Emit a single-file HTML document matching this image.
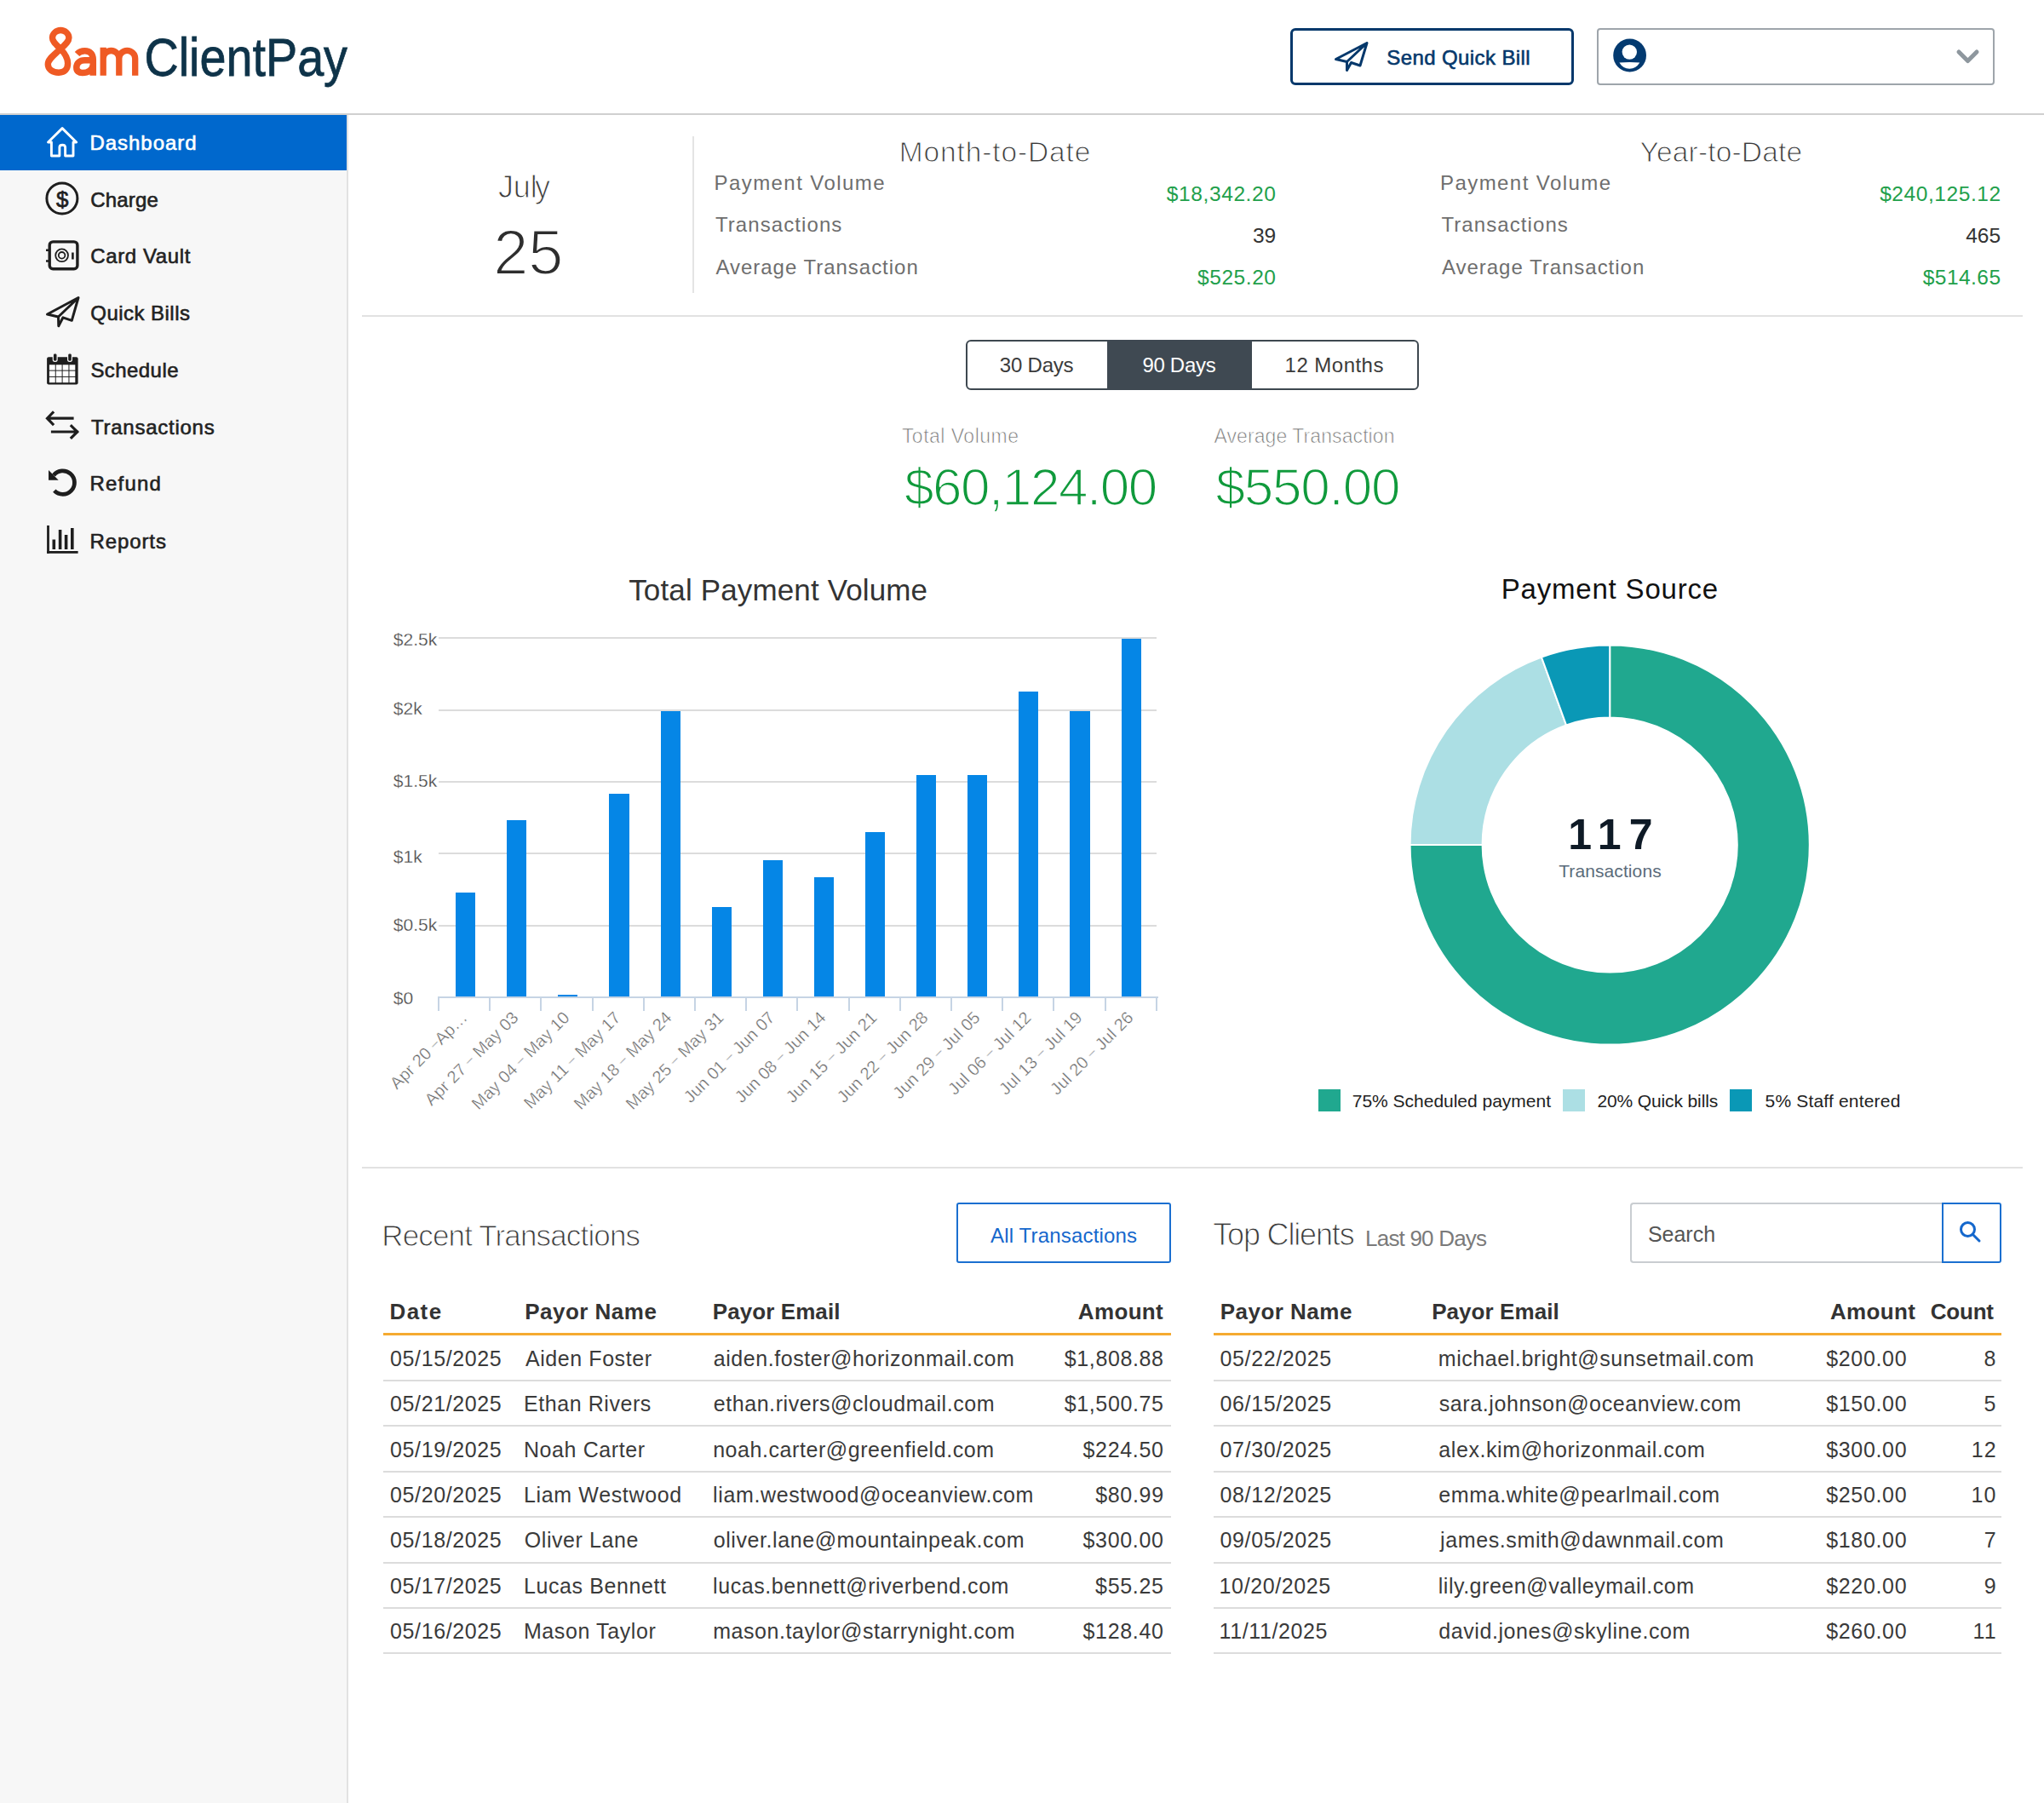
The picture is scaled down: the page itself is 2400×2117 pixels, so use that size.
<!DOCTYPE html>
<html><head><meta charset="utf-8"><title>8am ClientPay Dashboard</title>
<style>
html,body{margin:0;padding:0;}
body{width:2400px;height:2117px;position:relative;overflow:hidden;background:#fff;font-family:"Liberation Sans",sans-serif;}
.t{position:absolute;line-height:1;white-space:nowrap;}
.r{position:absolute;box-sizing:border-box;}
svg{position:absolute;overflow:visible;}
</style></head><body>
<div class="r" style="left:0px;top:133px;width:2400px;height:2px;background:#d0d0d0;"></div>
<div class="r" style="left:0px;top:135px;width:407px;height:1982px;background:#f7f7f7;"></div>
<div class="r" style="left:407px;top:135px;width:2px;height:1982px;background:#e2e2e2;"></div>
<div class="r" style="left:0px;top:135px;width:407px;height:65px;background:#0068cd;"></div>
<svg style="left:0;top:0" width="420" height="120">
<g fill="none" stroke="#ef5a24" stroke-width="7.4">
<path d="M71,57.5 C65,51.5 61.5,48.5 61.5,44.5 C61.5,39.5 66,35.5 71.2,35.5 C76.5,35.5 80.9,39.5 80.9,44.5 C80.9,48.5 77,52 71,57.5 C63,65 56.3,69.5 56.3,75.5 C56.3,81.2 61.5,85.2 69,85.2 C76.5,85.2 79.6,80.5 79.6,74.5 C79.6,68.5 77,63.5 71,57.5 Z"/>
<path d="M121.2,88.7 V55.8 M121.2,68.8 A9.3,9.3 0 0 1 139.8,68.8 V88.7 M139.8,68.8 A9.45,9.45 0 0 1 158.7,68.8 V88.7" stroke-width="7.3"/>
<path d="M90.5,63.5 C93,60.8 96,59.8 99.5,59.8 C106,59.8 109.3,63.5 109.3,70 V88.7 M109.3,70.8 H99.5 C93.2,70.8 89.8,74.5 89.8,79.3 C89.8,83.8 92.7,85.5 96.8,85.5 C103,85.5 109.3,82 109.3,75.5" stroke-width="7.5"/>
</g>
<text x="169.5" y="88.8" font-family="Liberation Sans" font-size="63.5" fill="#0e3349" stroke="#0e3349" stroke-width="0.8" textLength="238.5" lengthAdjust="spacingAndGlyphs">ClientPay</text>
</svg>
<div class="r" style="left:1515px;top:33px;width:333px;height:67px;border:3px solid #05386b;border-radius:6px;"></div>
<svg style="left:0;top:0" width="1" height="1">
<g fill="none" stroke="#05386b" stroke-width="3" stroke-linejoin="round" stroke-linecap="round">
<path d="M1568.5,69.5 L1605,50.5 L1597,77 L1586.5,73.5 L1581.5,82.5 L1581.5,72.5 Z M1605,50.5 L1581.5,72.5"/>
</g></svg>
<div class="t" style="top:56.38px;font-size:24px;color:#05386b;-webkit-text-stroke:0.6px #05386b;letter-spacing:0.394px;left:1628.32px;">Send Quick Bill</div>
<div class="r" style="left:1875px;top:33px;width:467px;height:67px;border:2px solid #9ea5ab;border-radius:4px;"></div>
<svg style="left:0;top:0" width="1" height="1">
<circle cx="1913.6" cy="65" r="19.4" fill="#033a70"/>
<circle cx="1913.3" cy="61.1" r="8.7" fill="#fff"/>
<path d="M1901.4,73.6 Q1913.3,72.6 1925.3,73.6 Q1921,80.8 1913.3,80.8 Q1905.6,80.8 1901.4,73.6 Z" fill="#fff"/>
<path d="M2300,61 L2310.5,71.5 L2321,61" fill="none" stroke="#8e979e" stroke-width="5" stroke-linecap="round" stroke-linejoin="round"/>
</svg>
<div class="t" style="top:155.68px;font-size:24px;color:#fff;-webkit-text-stroke:0.6px #fff;letter-spacing:0.953px;left:105.52px;">Dashboard</div>
<div class="t" style="top:223.08px;font-size:24px;color:#222;-webkit-text-stroke:0.6px #222;letter-spacing:0.172px;left:106.30px;">Charge</div>
<div class="t" style="top:289.48px;font-size:24px;color:#222;-webkit-text-stroke:0.6px #222;letter-spacing:0.609px;left:106.30px;">Card Vault</div>
<div class="t" style="top:355.78px;font-size:24px;color:#222;-webkit-text-stroke:0.6px #222;letter-spacing:0.456px;left:106.36px;">Quick Bills</div>
<div class="t" style="top:422.98px;font-size:24px;color:#222;-webkit-text-stroke:0.6px #222;letter-spacing:0.431px;left:106.42px;">Schedule</div>
<div class="t" style="top:489.98px;font-size:24px;color:#222;-webkit-text-stroke:0.6px #222;letter-spacing:0.744px;left:106.96px;">Transactions</div>
<div class="t" style="top:556.38px;font-size:24px;color:#222;-webkit-text-stroke:0.6px #222;letter-spacing:1.188px;left:105.52px;">Refund</div>
<div class="t" style="top:623.68px;font-size:24px;color:#222;-webkit-text-stroke:0.6px #222;letter-spacing:0.893px;left:105.52px;">Reports</div>
<svg style="left:0;top:0" width="1" height="1">
<path d="M60.4,183 L60.4,167 L56.5,167 L73.1,150.6 L89.7,167 L86,167 L86,183 L76.6,183 L76.6,173 Q76.6,170.2 73.25,170.2 Q69.9,170.2 69.9,173 L69.9,183 Z" fill="none" stroke="#fff" stroke-width="2.9" stroke-linejoin="round"/>
<g fill="none" stroke="#1e1e1e" stroke-width="3">
<circle cx="72.9" cy="233" r="18"/>
<rect x="58.2" y="283.9" width="32.7" height="31.8" rx="4" stroke-width="3.4"/>
<circle cx="72.6" cy="299.8" r="7.4" stroke-width="1.8"/>
<circle cx="72.6" cy="299.8" r="3.8" stroke-width="1.8"/>
<path d="M54,293.8 L58,293.8 M54,306.5 L58,306.5" stroke-width="2.6"/>
<path d="M85.4,296.5 L85.4,304.5" stroke-width="2.6"/>
<path d="M55.5,369 L92,349.5 L84.3,376.3 L74,372.8 L68.8,382.7 L68.5,372 Z M92,349.5 L68.5,372" stroke-linejoin="round"/>
<path d="M56.5,491.2 L85,491.2 M62,484.5 L55.5,491.2 L62,498 M61.5,507 L90.5,507 M84,500.3 L90.8,507 L84,513.8" stroke-linecap="square" stroke-width="3.2"/>
<path d="M63,558 A13.75,13.75 0 1 1 63.8,576.2" stroke-width="4.8"/>
</g>
<text x="73.2" y="242.8" text-anchor="middle" font-family="Liberation Sans" font-size="26" fill="#1e1e1e" stroke="#1e1e1e" stroke-width="0.7">$</text>
<path d="M57,552 L57,563.7 L68.7,563.7 Z" fill="#1e1e1e"/>
<rect x="55.1" y="419.3" width="36.5" height="32.3" rx="2" fill="#1e1e1e"/>
<rect x="62.3" y="414.8" width="4.8" height="9.5" rx="2" fill="#1e1e1e" stroke="#f7f7f7" stroke-width="1.2"/>
<rect x="79.6" y="414.8" width="4.8" height="9.5" rx="2" fill="#1e1e1e" stroke="#f7f7f7" stroke-width="1.2"/>
<g fill="#fff">
<rect x="57.90" y="428.30" width="6.85" height="6.3"/><rect x="65.75" y="428.30" width="6.85" height="6.3"/><rect x="73.60" y="428.30" width="6.85" height="6.3"/><rect x="81.45" y="428.30" width="6.85" height="6.3"/><rect x="57.90" y="435.60" width="6.85" height="6.3"/><rect x="65.75" y="435.60" width="6.85" height="6.3"/><rect x="73.60" y="435.60" width="6.85" height="6.3"/><rect x="81.45" y="435.60" width="6.85" height="6.3"/><rect x="57.90" y="442.90" width="6.85" height="6.3"/><rect x="65.75" y="442.90" width="6.85" height="6.3"/><rect x="73.60" y="442.90" width="6.85" height="6.3"/><rect x="81.45" y="442.90" width="6.85" height="6.3"/>
</g>
<g fill="#1e1e1e">
<rect x="55.1" y="617" width="2.8" height="32.8"/>
<rect x="55.1" y="647" width="36.5" height="2.8"/>
<rect x="61.5" y="633.5" width="3.6" height="11.5"/>
<rect x="68.8" y="622" width="3.6" height="23"/>
<rect x="75.8" y="628" width="3.6" height="17"/>
<rect x="83" y="620" width="3.6" height="25"/>
</g>
</svg>
<div class="t" style="top:202.22px;font-size:36px;color:#3a3a3a;-webkit-text-stroke:1.0px #fff;left:585.11px;">J</div>
<div class="t" style="top:202.22px;font-size:36px;color:#3a3a3a;-webkit-text-stroke:1.0px #fff;left:602.66px;">u</div>
<div class="t" style="top:202.22px;font-size:36px;color:#3a3a3a;-webkit-text-stroke:1.0px #fff;left:622.87px;">l</div>
<div class="t" style="top:202.22px;font-size:36px;color:#3a3a3a;-webkit-text-stroke:1.0px #fff;left:628.11px;">y</div>
<div class="t" style="top:260.34px;font-size:74px;color:#2e2e2e;-webkit-text-stroke:2.0px #fff;left:579.20px;">2</div>
<div class="t" style="top:260.34px;font-size:74px;color:#2e2e2e;-webkit-text-stroke:2.0px #fff;left:620.24px;">5</div>
<div class="r" style="left:813px;top:160px;width:2px;height:184px;background:#e4e4e4;"></div>
<div class="r" style="left:425px;top:370px;width:1950px;height:2px;background:#e2e2e2;"></div>
<div class="t" style="top:162.34px;font-size:33.5px;color:#3a3a3a;-webkit-text-stroke:1.0px #fff;letter-spacing:0.869px;left:1055.84px;">Month-to-Date</div>
<div class="t" style="top:202.68px;font-size:24px;color:#6e6e6e;letter-spacing:1.432px;left:838.52px;">Payment Volume</div>
<div class="t" style="top:251.68px;font-size:24px;color:#6e6e6e;letter-spacing:1.080px;left:839.96px;">Transactions</div>
<div class="t" style="top:301.68px;font-size:24px;color:#6e6e6e;letter-spacing:0.978px;left:840.44px;">Average Transaction</div>
<div class="t" style="top:216.26px;font-size:24.5px;color:#22a04b;letter-spacing:0.616px;left:1369.76px;">$18,342.20</div>
<div class="t" style="top:264.76px;font-size:24.5px;color:#333;left:1470.91px;">39</div>
<div class="t" style="top:314.26px;font-size:24.5px;color:#22a04b;letter-spacing:0.560px;left:1406.06px;">$525.20</div>
<div class="t" style="top:162.34px;font-size:33.5px;color:#3a3a3a;-webkit-text-stroke:1.0px #fff;letter-spacing:0.172px;left:1925.55px;">Year-to-Date</div>
<div class="t" style="top:202.68px;font-size:24px;color:#6e6e6e;letter-spacing:1.432px;left:1691.02px;">Payment Volume</div>
<div class="t" style="top:251.68px;font-size:24px;color:#6e6e6e;letter-spacing:1.080px;left:1692.46px;">Transactions</div>
<div class="t" style="top:301.68px;font-size:24px;color:#6e6e6e;letter-spacing:0.978px;left:1692.94px;">Average Transaction</div>
<div class="t" style="top:216.26px;font-size:24.5px;color:#22a04b;letter-spacing:0.579px;left:2207.16px;">$240,125.12</div>
<div class="t" style="top:264.76px;font-size:24.5px;color:#333;left:2308.13px;">465</div>
<div class="t" style="top:314.26px;font-size:24.5px;color:#22a04b;letter-spacing:0.453px;left:2257.76px;">$514.65</div>
<div class="r" style="left:1134px;top:399px;width:532px;height:59px;border:2px solid #3e4850;border-radius:6px;"></div>
<div class="r" style="left:1300px;top:399px;width:170px;height:59px;background:#3f4952;"></div>
<div class="t" style="top:416.68px;font-size:24px;color:#3b3b3b;letter-spacing:-0.213px;left:1173.85px;">30 Days</div>
<div class="t" style="top:416.68px;font-size:24px;color:#fff;letter-spacing:-0.300px;left:1341.42px;">90 Days</div>
<div class="t" style="top:416.68px;font-size:24px;color:#3b3b3b;letter-spacing:0.470px;left:1508.60px;">12 Months</div>
<div class="t" style="top:500.53px;font-size:23px;color:#777;-webkit-text-stroke:0.7px #fff;letter-spacing:0.493px;left:1058.88px;">Total Volume</div>
<div class="t" style="top:500.53px;font-size:23px;color:#777;-webkit-text-stroke:0.7px #fff;letter-spacing:0.083px;left:1425.44px;">Average Transaction</div>
<div class="t" style="top:541.10px;font-size:62px;color:#109a3c;-webkit-text-stroke:1.6px #fff;letter-spacing:-1.429px;left:1061.88px;">$60,124.00</div>
<div class="t" style="top:540.50px;font-size:62px;color:#109a3c;-webkit-text-stroke:1.6px #fff;letter-spacing:-1.172px;left:1427.38px;">$550.00</div>
<div class="t" style="top:674.77px;font-size:35px;color:#333;letter-spacing:0.138px;left:738.21px;">Total Payment Volume</div>
<div class="r" style="left:515px;top:748px;width:843px;height:2px;background:#dcdcdc;"></div>
<div class="t" style="top:740.22px;font-size:21px;color:#444;-webkit-text-stroke:0.3px #fff;left:461.79px;">$2.5k</div>
<div class="r" style="left:515px;top:833px;width:843px;height:2px;background:#dcdcdc;"></div>
<div class="t" style="top:820.52px;font-size:21px;color:#444;-webkit-text-stroke:0.3px #fff;left:461.79px;">$2k</div>
<div class="r" style="left:515px;top:917px;width:843px;height:2px;background:#dcdcdc;"></div>
<div class="t" style="top:905.52px;font-size:21px;color:#444;-webkit-text-stroke:0.3px #fff;left:461.79px;">$1.5k</div>
<div class="r" style="left:515px;top:1001px;width:843px;height:2px;background:#dcdcdc;"></div>
<div class="t" style="top:995.22px;font-size:21px;color:#444;-webkit-text-stroke:0.3px #fff;left:461.79px;">$1k</div>
<div class="r" style="left:515px;top:1086px;width:843px;height:2px;background:#dcdcdc;"></div>
<div class="t" style="top:1075.02px;font-size:21px;color:#444;-webkit-text-stroke:0.3px #fff;left:461.79px;">$0.5k</div>
<div class="t" style="top:1160.72px;font-size:21px;color:#444;-webkit-text-stroke:0.3px #fff;left:461.79px;">$0</div>
<div class="r" style="left:514px;top:1170px;width:846px;height:2px;background:#c6d4e4;"></div>
<div class="r" style="left:514px;top:1171px;width:2px;height:16px;background:#c6d4e4;"></div>
<div class="r" style="left:574px;top:1171px;width:2px;height:16px;background:#c6d4e4;"></div>
<div class="r" style="left:634px;top:1171px;width:2px;height:16px;background:#c6d4e4;"></div>
<div class="r" style="left:695px;top:1171px;width:2px;height:16px;background:#c6d4e4;"></div>
<div class="r" style="left:755px;top:1171px;width:2px;height:16px;background:#c6d4e4;"></div>
<div class="r" style="left:815px;top:1171px;width:2px;height:16px;background:#c6d4e4;"></div>
<div class="r" style="left:875px;top:1171px;width:2px;height:16px;background:#c6d4e4;"></div>
<div class="r" style="left:935px;top:1171px;width:2px;height:16px;background:#c6d4e4;"></div>
<div class="r" style="left:996px;top:1171px;width:2px;height:16px;background:#c6d4e4;"></div>
<div class="r" style="left:1056px;top:1171px;width:2px;height:16px;background:#c6d4e4;"></div>
<div class="r" style="left:1116px;top:1171px;width:2px;height:16px;background:#c6d4e4;"></div>
<div class="r" style="left:1176px;top:1171px;width:2px;height:16px;background:#c6d4e4;"></div>
<div class="r" style="left:1236px;top:1171px;width:2px;height:16px;background:#c6d4e4;"></div>
<div class="r" style="left:1297px;top:1171px;width:2px;height:16px;background:#c6d4e4;"></div>
<div class="r" style="left:1357px;top:1171px;width:2px;height:16px;background:#c6d4e4;"></div>
<div class="r" style="left:535.0px;top:1048.2px;width:23.2px;height:121.8px;background:#0586e6"></div>
<div class="r" style="left:595.1px;top:963.3px;width:23.2px;height:206.7px;background:#0586e6"></div>
<div class="r" style="left:655.2px;top:1168.1px;width:23.2px;height:1.9px;background:#0586e6"></div>
<div class="r" style="left:715.4px;top:931.7px;width:23.2px;height:238.3px;background:#0586e6"></div>
<div class="r" style="left:775.5px;top:834.9px;width:23.2px;height:335.1px;background:#0586e6"></div>
<div class="r" style="left:835.6px;top:1065px;width:23.2px;height:105.0px;background:#0586e6"></div>
<div class="r" style="left:895.7px;top:1010.2px;width:23.2px;height:159.8px;background:#0586e6"></div>
<div class="r" style="left:955.8px;top:1030.3px;width:23.2px;height:139.7px;background:#0586e6"></div>
<div class="r" style="left:1016.0px;top:977.1px;width:23.2px;height:192.9px;background:#0586e6"></div>
<div class="r" style="left:1076.1px;top:910px;width:23.2px;height:260.0px;background:#0586e6"></div>
<div class="r" style="left:1136.2px;top:910px;width:23.2px;height:260.0px;background:#0586e6"></div>
<div class="r" style="left:1196.3px;top:812px;width:23.2px;height:358.0px;background:#0586e6"></div>
<div class="r" style="left:1256.4px;top:835.1px;width:23.2px;height:334.9px;background:#0586e6"></div>
<div class="r" style="left:1316.6px;top:749.9px;width:23.2px;height:420.1px;background:#0586e6"></div>
<div class="t" style="left:149.60000000000002px;top:1178.57px;width:400px;text-align:right;font-size:20px;color:#666;-webkit-text-stroke:0.4px #fff;transform-origin:100% 16.93px;transform:rotate(-45deg);letter-spacing:0.1px">Apr 20 <span style="font-size:16px;vertical-align:2.5px">–</span>Ap…</div>
<div class="t" style="left:209.80000000000007px;top:1178.57px;width:400px;text-align:right;font-size:20px;color:#666;-webkit-text-stroke:0.4px #fff;transform-origin:100% 16.93px;transform:rotate(-45deg);letter-spacing:0.1px">Apr 27 <span style="font-size:16px;vertical-align:2.5px">–</span> May 03</div>
<div class="t" style="left:270.0px;top:1178.57px;width:400px;text-align:right;font-size:20px;color:#666;-webkit-text-stroke:0.4px #fff;transform-origin:100% 16.93px;transform:rotate(-45deg);letter-spacing:0.1px">May 04 <span style="font-size:16px;vertical-align:2.5px">–</span> May 10</div>
<div class="t" style="left:330.20000000000005px;top:1178.57px;width:400px;text-align:right;font-size:20px;color:#666;-webkit-text-stroke:0.4px #fff;transform-origin:100% 16.93px;transform:rotate(-45deg);letter-spacing:0.1px">May 11 <span style="font-size:16px;vertical-align:2.5px">–</span> May 17</div>
<div class="t" style="left:390.4px;top:1178.57px;width:400px;text-align:right;font-size:20px;color:#666;-webkit-text-stroke:0.4px #fff;transform-origin:100% 16.93px;transform:rotate(-45deg);letter-spacing:0.1px">May 18 <span style="font-size:16px;vertical-align:2.5px">–</span> May 24</div>
<div class="t" style="left:450.6px;top:1178.57px;width:400px;text-align:right;font-size:20px;color:#666;-webkit-text-stroke:0.4px #fff;transform-origin:100% 16.93px;transform:rotate(-45deg);letter-spacing:0.1px">May 25 <span style="font-size:16px;vertical-align:2.5px">–</span> May 31</div>
<div class="t" style="left:510.80000000000007px;top:1178.57px;width:400px;text-align:right;font-size:20px;color:#666;-webkit-text-stroke:0.4px #fff;transform-origin:100% 16.93px;transform:rotate(-45deg);letter-spacing:0.1px">Jun 01 <span style="font-size:16px;vertical-align:2.5px">–</span> Jun 07</div>
<div class="t" style="left:571.0000000000001px;top:1178.57px;width:400px;text-align:right;font-size:20px;color:#666;-webkit-text-stroke:0.4px #fff;transform-origin:100% 16.93px;transform:rotate(-45deg);letter-spacing:0.1px">Jun 08 <span style="font-size:16px;vertical-align:2.5px">–</span> Jun 14</div>
<div class="t" style="left:631.1999999999998px;top:1178.57px;width:400px;text-align:right;font-size:20px;color:#666;-webkit-text-stroke:0.4px #fff;transform-origin:100% 16.93px;transform:rotate(-45deg);letter-spacing:0.1px">Jun 15 <span style="font-size:16px;vertical-align:2.5px">–</span> Jun 21</div>
<div class="t" style="left:691.4000000000001px;top:1178.57px;width:400px;text-align:right;font-size:20px;color:#666;-webkit-text-stroke:0.4px #fff;transform-origin:100% 16.93px;transform:rotate(-45deg);letter-spacing:0.1px">Jun 22 <span style="font-size:16px;vertical-align:2.5px">–</span> Jun 28</div>
<div class="t" style="left:751.5999999999999px;top:1178.57px;width:400px;text-align:right;font-size:20px;color:#666;-webkit-text-stroke:0.4px #fff;transform-origin:100% 16.93px;transform:rotate(-45deg);letter-spacing:0.1px">Jun 29 <span style="font-size:16px;vertical-align:2.5px">–</span> Jul 05</div>
<div class="t" style="left:811.8px;top:1178.57px;width:400px;text-align:right;font-size:20px;color:#666;-webkit-text-stroke:0.4px #fff;transform-origin:100% 16.93px;transform:rotate(-45deg);letter-spacing:0.1px">Jul 06 <span style="font-size:16px;vertical-align:2.5px">–</span> Jul 12</div>
<div class="t" style="left:872.0px;top:1178.57px;width:400px;text-align:right;font-size:20px;color:#666;-webkit-text-stroke:0.4px #fff;transform-origin:100% 16.93px;transform:rotate(-45deg);letter-spacing:0.1px">Jul 13 <span style="font-size:16px;vertical-align:2.5px">–</span> Jul 19</div>
<div class="t" style="left:932.1999999999998px;top:1178.57px;width:400px;text-align:right;font-size:20px;color:#666;-webkit-text-stroke:0.4px #fff;transform-origin:100% 16.93px;transform:rotate(-45deg);letter-spacing:0.1px">Jul 20 <span style="font-size:16px;vertical-align:2.5px">–</span> Jul 26</div>
<div class="t" style="top:674.86px;font-size:33px;color:#111;letter-spacing:0.813px;left:1762.68px;">Payment Source</div>
<svg style="left:0;top:0" width="1" height="1"><path d="M1890.20,757.40 A234.6,234.6 0 1 1 1655.60,992.00 L1740.60,992.00 A149.6,149.6 0 1 0 1890.20,842.40 Z" fill="#20a88f" stroke="#fff" stroke-width="2" stroke-linejoin="miter"/><path d="M1655.60,992.00 A234.6,234.6 0 0 1 1809.96,771.55 L1839.03,851.42 A149.6,149.6 0 0 0 1740.60,992.00 Z" fill="#acdfe4" stroke="#fff" stroke-width="2" stroke-linejoin="miter"/><path d="M1809.96,771.55 A234.6,234.6 0 0 1 1890.20,757.40 L1890.20,842.40 A149.6,149.6 0 0 0 1839.03,851.42 Z" fill="#0a98b6" stroke="#fff" stroke-width="2" stroke-linejoin="miter"/></svg>
<div class="t" style="top:955.16px;font-size:50px;color:#0e1a26;font-weight:bold;letter-spacing:9.312px;left:1841.28px;">117</div>
<div class="t" style="top:1011.82px;font-size:21px;color:#5b6b7a;letter-spacing:0.097px;left:1830.18px;">Transactions</div>
<div class="r" style="left:1548px;top:1279px;width:26px;height:26px;background:#20a88f;"></div>
<div class="r" style="left:1835px;top:1279px;width:26px;height:26px;background:#acdfe4;"></div>
<div class="r" style="left:2031px;top:1279px;width:26px;height:26px;background:#0a98b6;"></div>
<div class="t" style="top:1281.92px;font-size:21px;color:#222;letter-spacing:-0.013px;left:1587.75px;">75% Scheduled payment</div>
<div class="t" style="top:1281.92px;font-size:21px;color:#222;letter-spacing:-0.125px;left:1875.45px;">20% Quick bills</div>
<div class="t" style="top:1281.92px;font-size:21px;color:#222;letter-spacing:0.181px;left:2072.56px;">5% Staff entered</div>
<div class="r" style="left:425px;top:1370px;width:1950px;height:2px;background:#e2e2e2;"></div>
<div class="t" style="top:1433.07px;font-size:35px;color:#3a3a3a;-webkit-text-stroke:1.0px #fff;letter-spacing:-0.851px;left:448.31px;">Recent Transactions</div>
<div class="r" style="left:1123px;top:1412px;width:252px;height:71px;border:2px solid #1a6fd0;border-radius:3px;"></div>
<div class="t" style="top:1438.98px;font-size:24px;color:#1467cc;letter-spacing:0.184px;left:1162.94px;">All Transactions</div>
<div class="t" style="top:1526.99px;font-size:26px;color:#333;font-weight:bold;letter-spacing:1.415px;left:457.55px;">Date</div>
<div class="t" style="top:1526.99px;font-size:26px;color:#333;font-weight:bold;letter-spacing:0.480px;left:616.25px;">Payor Name</div>
<div class="t" style="top:1526.99px;font-size:26px;color:#333;font-weight:bold;letter-spacing:0.072px;left:836.85px;">Payor Email</div>
<div class="t" style="top:1526.99px;font-size:26px;color:#333;font-weight:bold;letter-spacing:0.339px;left:1265.85px;">Amount</div>
<div class="r" style="left:450px;top:1565px;width:925px;height:3px;background:#f5aa30;"></div>
<div class="t" style="top:1582.73px;font-size:25px;color:#3a3a3a;letter-spacing:0.616px;left:458.06px;">05/15/2025</div>
<div class="t" style="top:1582.73px;font-size:25px;color:#3a3a3a;letter-spacing:0.578px;left:616.94px;">Aiden Foster</div>
<div class="t" style="top:1582.73px;font-size:25px;color:#3a3a3a;letter-spacing:0.559px;left:837.74px;">aiden.foster@horizonmail.com</div>
<div class="t" style="top:1582.73px;font-size:25px;color:#3a3a3a;letter-spacing:0.618px;left:1249.83px;">$1,808.88</div>
<div class="r" style="left:450px;top:1620px;width:925px;height:2px;background:#dcdcdc;"></div>
<div class="t" style="top:1636.13px;font-size:25px;color:#3a3a3a;letter-spacing:0.616px;left:458.06px;">05/21/2025</div>
<div class="t" style="top:1636.13px;font-size:25px;color:#3a3a3a;letter-spacing:0.573px;left:614.94px;">Ethan Rivers</div>
<div class="t" style="top:1636.13px;font-size:25px;color:#3a3a3a;letter-spacing:0.564px;left:837.74px;">ethan.rivers@cloudmail.com</div>
<div class="t" style="top:1636.13px;font-size:25px;color:#3a3a3a;letter-spacing:0.618px;left:1249.77px;">$1,500.75</div>
<div class="r" style="left:450px;top:1673px;width:925px;height:2px;background:#dcdcdc;"></div>
<div class="t" style="top:1689.53px;font-size:25px;color:#3a3a3a;letter-spacing:0.616px;left:458.06px;">05/19/2025</div>
<div class="t" style="top:1689.53px;font-size:25px;color:#3a3a3a;letter-spacing:0.602px;left:614.94px;">Noah Carter</div>
<div class="t" style="top:1689.53px;font-size:25px;color:#3a3a3a;letter-spacing:0.563px;left:837.17px;">noah.carter@greenfield.com</div>
<div class="t" style="top:1689.53px;font-size:25px;color:#3a3a3a;letter-spacing:0.668px;left:1271.51px;">$224.50</div>
<div class="r" style="left:450px;top:1727px;width:925px;height:2px;background:#dcdcdc;"></div>
<div class="t" style="top:1742.93px;font-size:25px;color:#3a3a3a;letter-spacing:0.616px;left:458.06px;">05/20/2025</div>
<div class="t" style="top:1742.93px;font-size:25px;color:#3a3a3a;letter-spacing:0.652px;left:614.94px;">Liam Westwood</div>
<div class="t" style="top:1742.93px;font-size:25px;color:#3a3a3a;letter-spacing:0.618px;left:837.11px;">liam.westwood@oceanview.com</div>
<div class="t" style="top:1742.93px;font-size:25px;color:#3a3a3a;letter-spacing:0.676px;left:1286.21px;">$80.99</div>
<div class="r" style="left:450px;top:1780px;width:925px;height:2px;background:#dcdcdc;"></div>
<div class="t" style="top:1796.33px;font-size:25px;color:#3a3a3a;letter-spacing:0.616px;left:458.06px;">05/18/2025</div>
<div class="t" style="top:1796.33px;font-size:25px;color:#3a3a3a;letter-spacing:0.565px;left:615.81px;">Oliver Lane</div>
<div class="t" style="top:1796.33px;font-size:25px;color:#3a3a3a;letter-spacing:0.577px;left:837.74px;">oliver.lane@mountainpeak.com</div>
<div class="t" style="top:1796.33px;font-size:25px;color:#3a3a3a;letter-spacing:0.668px;left:1271.51px;">$300.00</div>
<div class="r" style="left:450px;top:1834px;width:925px;height:2px;background:#dcdcdc;"></div>
<div class="t" style="top:1849.73px;font-size:25px;color:#3a3a3a;letter-spacing:0.616px;left:458.06px;">05/17/2025</div>
<div class="t" style="top:1849.73px;font-size:25px;color:#3a3a3a;letter-spacing:0.591px;left:614.94px;">Lucas Bennett</div>
<div class="t" style="top:1849.73px;font-size:25px;color:#3a3a3a;letter-spacing:0.570px;left:837.11px;">lucas.bennett@riverbend.com</div>
<div class="t" style="top:1849.73px;font-size:25px;color:#3a3a3a;letter-spacing:0.677px;left:1286.08px;">$55.25</div>
<div class="r" style="left:450px;top:1887px;width:925px;height:2px;background:#dcdcdc;"></div>
<div class="t" style="top:1903.13px;font-size:25px;color:#3a3a3a;letter-spacing:0.616px;left:458.06px;">05/16/2025</div>
<div class="t" style="top:1903.13px;font-size:25px;color:#3a3a3a;letter-spacing:0.596px;left:614.94px;">Mason Taylor</div>
<div class="t" style="top:1903.13px;font-size:25px;color:#3a3a3a;letter-spacing:0.560px;left:837.17px;">mason.taylor@starrynight.com</div>
<div class="t" style="top:1903.13px;font-size:25px;color:#3a3a3a;letter-spacing:0.668px;left:1271.51px;">$128.40</div>
<div class="r" style="left:450px;top:1940px;width:925px;height:2px;background:#dcdcdc;"></div>
<div class="t" style="top:1432.42px;font-size:36px;color:#3a3a3a;-webkit-text-stroke:1.0px #fff;letter-spacing:-1.164px;left:1424.19px;">Top Clients</div>
<div class="t" style="top:1440.89px;font-size:26px;color:#7a7a7a;letter-spacing:-0.793px;left:1603.06px;">Last 90 Days</div>
<div class="r" style="left:1914px;top:1412px;width:368px;height:71px;border:2px solid #c9cdd1;border-right:none;border-radius:4px 0 0 4px;"></div>
<div class="t" style="top:1437.43px;font-size:25px;color:#555;left:1934.88px;">Search</div>
<div class="r" style="left:2280px;top:1412px;width:70px;height:71px;border:2px solid #1a6fd0;border-radius:0 3px 3px 0;"></div>
<svg style="left:0;top:0" width="1" height="1"><g fill="none" stroke="#1467cc" stroke-width="3" stroke-linecap="round">
<circle cx="2310.5" cy="1443.5" r="8"/><path d="M2316.5,1449.5 L2324,1457"/></g></svg>
<div class="t" style="top:1526.99px;font-size:26px;color:#333;font-weight:bold;letter-spacing:0.480px;left:1432.74px;">Payor Name</div>
<div class="t" style="top:1526.99px;font-size:26px;color:#333;font-weight:bold;letter-spacing:0.072px;left:1681.14px;">Payor Email</div>
<div class="t" style="top:1526.99px;font-size:26px;color:#333;font-weight:bold;letter-spacing:0.339px;left:2148.95px;">Amount</div>
<div class="t" style="top:1526.99px;font-size:26px;color:#333;font-weight:bold;letter-spacing:-0.219px;left:2266.76px;">Count</div>
<div class="r" style="left:1425px;top:1565px;width:925px;height:3px;background:#f5aa30;"></div>
<div class="t" style="top:1582.73px;font-size:25px;color:#3a3a3a;letter-spacing:0.616px;left:1432.56px;">05/22/2025</div>
<div class="t" style="top:1582.73px;font-size:25px;color:#3a3a3a;letter-spacing:0.565px;left:1688.78px;">michael.bright@sunsetmail.com</div>
<div class="t" style="top:1582.73px;font-size:25px;color:#3a3a3a;letter-spacing:0.668px;left:2144.21px;">$200.00</div>
<div class="t" style="top:1582.73px;font-size:25px;color:#3a3a3a;left:2329.59px;">8</div>
<div class="r" style="left:1425px;top:1620px;width:925px;height:2px;background:#dcdcdc;"></div>
<div class="t" style="top:1636.13px;font-size:25px;color:#3a3a3a;letter-spacing:0.616px;left:1432.56px;">06/15/2025</div>
<div class="t" style="top:1636.13px;font-size:25px;color:#3a3a3a;letter-spacing:0.607px;left:1689.71px;">sara.johnson@oceanview.com</div>
<div class="t" style="top:1636.13px;font-size:25px;color:#3a3a3a;letter-spacing:0.668px;left:2144.21px;">$150.00</div>
<div class="t" style="top:1636.13px;font-size:25px;color:#3a3a3a;left:2329.53px;">5</div>
<div class="r" style="left:1425px;top:1673px;width:925px;height:2px;background:#dcdcdc;"></div>
<div class="t" style="top:1689.53px;font-size:25px;color:#3a3a3a;letter-spacing:0.616px;left:1432.56px;">07/30/2025</div>
<div class="t" style="top:1689.53px;font-size:25px;color:#3a3a3a;letter-spacing:0.580px;left:1689.34px;">alex.kim@horizonmail.com</div>
<div class="t" style="top:1689.53px;font-size:25px;color:#3a3a3a;letter-spacing:0.668px;left:2144.21px;">$300.00</div>
<div class="t" style="top:1689.53px;font-size:25px;color:#3a3a3a;letter-spacing:1.111px;left:2314.73px;">12</div>
<div class="r" style="left:1425px;top:1727px;width:925px;height:2px;background:#dcdcdc;"></div>
<div class="t" style="top:1742.93px;font-size:25px;color:#3a3a3a;letter-spacing:0.616px;left:1432.56px;">08/12/2025</div>
<div class="t" style="top:1742.93px;font-size:25px;color:#3a3a3a;letter-spacing:0.613px;left:1689.34px;">emma.white@pearlmail.com</div>
<div class="t" style="top:1742.93px;font-size:25px;color:#3a3a3a;letter-spacing:0.668px;left:2144.21px;">$250.00</div>
<div class="t" style="top:1742.93px;font-size:25px;color:#3a3a3a;letter-spacing:1.122px;left:2314.47px;">10</div>
<div class="r" style="left:1425px;top:1780px;width:925px;height:2px;background:#dcdcdc;"></div>
<div class="t" style="top:1796.33px;font-size:25px;color:#3a3a3a;letter-spacing:0.616px;left:1432.56px;">09/05/2025</div>
<div class="t" style="top:1796.33px;font-size:25px;color:#3a3a3a;letter-spacing:0.621px;left:1691.03px;">james.smith@dawnmail.com</div>
<div class="t" style="top:1796.33px;font-size:25px;color:#3a3a3a;letter-spacing:0.668px;left:2144.21px;">$180.00</div>
<div class="t" style="top:1796.33px;font-size:25px;color:#3a3a3a;left:2329.71px;">7</div>
<div class="r" style="left:1425px;top:1834px;width:925px;height:2px;background:#dcdcdc;"></div>
<div class="t" style="top:1849.73px;font-size:25px;color:#3a3a3a;letter-spacing:0.611px;left:1431.62px;">10/20/2025</div>
<div class="t" style="top:1849.73px;font-size:25px;color:#3a3a3a;letter-spacing:0.533px;left:1688.71px;">lily.green@valleymail.com</div>
<div class="t" style="top:1849.73px;font-size:25px;color:#3a3a3a;letter-spacing:0.668px;left:2144.21px;">$220.00</div>
<div class="t" style="top:1849.73px;font-size:25px;color:#3a3a3a;left:2329.65px;">9</div>
<div class="r" style="left:1425px;top:1887px;width:925px;height:2px;background:#dcdcdc;"></div>
<div class="t" style="top:1903.13px;font-size:25px;color:#3a3a3a;letter-spacing:0.592px;left:1431.62px;">11/11/2025</div>
<div class="t" style="top:1903.13px;font-size:25px;color:#3a3a3a;letter-spacing:0.572px;left:1689.34px;">david.jones@skyline.com</div>
<div class="t" style="top:1903.13px;font-size:25px;color:#3a3a3a;letter-spacing:0.668px;left:2144.21px;">$260.00</div>
<div class="t" style="top:1903.13px;font-size:25px;color:#3a3a3a;letter-spacing:1.029px;left:2316.62px;">11</div>
<div class="r" style="left:1425px;top:1940px;width:925px;height:2px;background:#dcdcdc;"></div>
</body></html>
